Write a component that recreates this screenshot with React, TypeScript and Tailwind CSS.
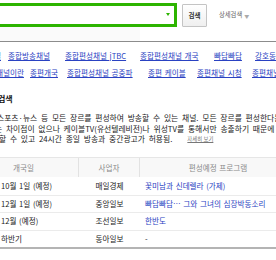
import React from 'react';

const related1 = [
  { box: 'w-[21px] -ml-[13px]', text: '채널' },
  { box: 'w-[57px]', text: '종합방송채널' },
  { box: 'w-[75px]', text: '종합편성채널 jTBC' },
  { box: 'w-[74px]', text: '종합편성채널 개국' },
  { box: 'w-[41px]', text: '빠담빠담' },
  { box: 'w-[60px]', text: '강호동 종편' },
];

const related2 = [
  { box: 'w-[34px] -ml-[4px]', text: '채널이란' },
  { box: 'w-[37px]', text: '종편개국' },
  { box: 'w-[81px]', text: '종합편성채널 공중파' },
  { box: 'w-[49px]', text: '종편 케이블' },
  { box: 'w-[55px]', text: '종편채널 시청' },
  { box: 'w-[60px]', text: '종편채널' },
];

const channels = [
  { date: '10월 1일 (예정)', owner: '매일경제', show: '꽃미남과 신데렐라 (가제)' },
  { date: '12월 1일 (예정)', owner: '중앙일보', show: '빠담빠담… 그와 그녀의 심장박동소리' },
  { date: '12월 (예정)', owner: '조선일보', show: '한반도' },
  { date: '하반기', owner: '동아일보', show: '' },
];

const LinkRow = ({ items }: { items: { box: string; text: string }[] }) => (
  <div className="flex h-[17px] items-center whitespace-nowrap">
    {items.map((item) => (
      <div key={item.text} className={`shrink-0 ${item.box}`}>
        <span className="text-[#2a42c2] underline decoration-[#2a42c2]">{item.text}</span>
      </div>
    ))}
  </div>
);

export default function App() {
  return (
    <div className="h-[260px] w-[276px] overflow-hidden bg-white font-['Noto_Sans_CJK_KR',sans-serif] text-[7.8px] leading-none text-[#222] [word-spacing:2px]">
      {/* search bar */}
      <div className="flex h-[27px] items-start pt-[3px]">
        <div className="relative h-[24px] w-[177px] shrink-0 border-[3px] border-l-0 border-[#2db400] bg-white">
          <svg className="absolute right-[4px] top-[7px]" width="4" height="3" viewBox="0 0 4 3">
            <path d="M0 0h4L2 3z" fill="#2db400" />
          </svg>
        </div>
        <button className="ml-[5px] mt-[1px] flex h-[23px] w-[25px] shrink-0 items-center justify-center rounded-[1px] border border-[#c4c4c4] bg-gradient-to-b from-white to-[#efefef] text-[6.5px] font-bold text-[#333]">
          검색
        </button>
        <div className="ml-[12px] flex h-[24px] items-center text-[6.3px] text-[#666] [word-spacing:0px]">
          상세검색
          <span className="ml-[2px] text-[5px] text-[#aaa]">▼</span>
        </div>
      </div>
      <div className="h-[14px] w-[140px] bg-[#fafafa]" />
      <div className="h-px bg-[#8c8c8c]" />

      {/* related searches */}
      <div className="pt-[5px] text-[7.6px] [word-spacing:1px]">
        <LinkRow items={related1} />
        <LinkRow items={related2} />
      </div>

      {/* dictionary */}
      <div className="mt-[12px] flex h-[12px] items-center whitespace-nowrap">
        <span className="-ml-[2px] text-[8px] font-bold text-[#111]">검색</span>
      </div>
      <div className="mt-[8px] whitespace-nowrap leading-[10.5px]">
        <div className="-ml-[3px]">스포츠·뉴스 등 모든 장르를 편성하여 방송할 수 있는 채널. 모든 장르를 편성한다는</div>
        <div className="-ml-[5px]">는 차이점이 없으나 케이블TV(유선텔레비전)나 위성TV를 통해서만 송출하기 때문에</div>
        <div className="-ml-[1px] flex items-center">
          할 수 있고 24시간 종일 방송과 중간광고가 허용됨.
          <span className="ml-[15px] text-[5.4px] text-[#777] underline [word-spacing:0px]">자세히 보기</span>
        </div>
      </div>

      {/* channel table */}
      <div className="mt-[12.5px] w-[296px] border-b-2 border-[#b4b4b4] text-[7.6px] [word-spacing:1px]">
        <div className="grid h-[20px] grid-cols-[79px_61px_1fr] border-t border-[#e6e6e6] bg-[#f8f8f8] text-[#8a8a8a]">
          <div className="flex items-center border-r border-[#e2e2e2] pl-[13px]">개국일</div>
          <div className="flex items-center justify-center border-r border-[#e2e2e2]">사업자</div>
          <div className="flex items-center justify-center">편성예정 프로그램</div>
        </div>
        {channels.map((c, i) => (
          <div
            key={c.owner}
            className={`grid h-[17.5px] grid-cols-[79px_61px_1fr] whitespace-nowrap ${i > 0 ? 'border-t border-[#ebebeb]' : ''}`}
          >
            <div className="flex items-center pl-[1px]">{c.date}</div>
            <div className="flex items-center justify-center">{c.owner}</div>
            <div className="flex items-center pl-[5px]">
              {c.show ? <span className="text-[#2a42c2]">{c.show}</span> : <span className="text-[#222]">-</span>}
            </div>
          </div>
        ))}
      </div>
    </div>
  );
}
